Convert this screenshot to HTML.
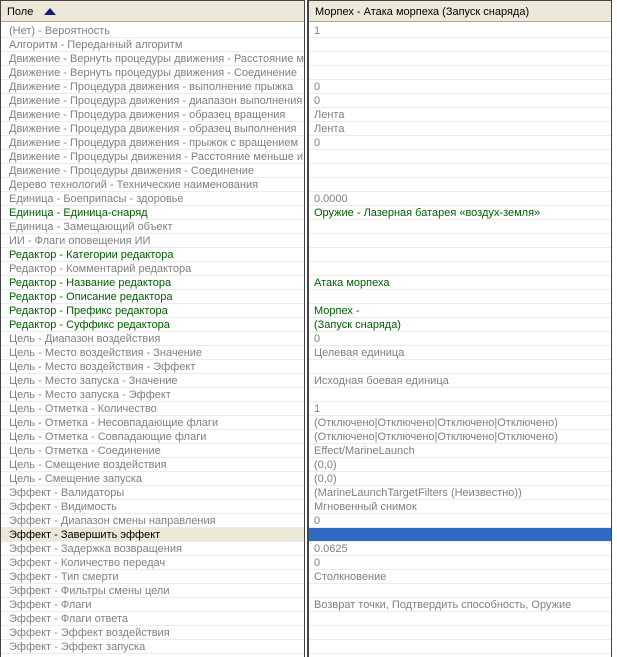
<!DOCTYPE html>
<html><head><meta charset="utf-8"><style>
body{margin:0;width:617px;height:657px;overflow:hidden;background:#fff;font-family:"Liberation Sans","DejaVu Sans",sans-serif;font-size:11px;color:#808080;position:relative}
.pane{position:absolute;top:0;height:657px;overflow:hidden;background:#fff}
#l{left:0;width:304px;border-left:1px solid #444}
#r{left:308px;width:303px;border-left:1px solid #444}
.sep{position:absolute;left:304px;top:0;width:4px;height:657px;background:#fff;border-left:1px solid #444;border-right:1px solid #444;box-sizing:border-box}
.hd{height:22px;background:#ece9d8;border-bottom:1px solid #aca899;border-top:1px solid #444;box-sizing:border-box;color:#000;line-height:22px;padding-left:6px;white-space:nowrap;position:relative}
.hd:after{content:"";position:absolute;right:0;top:2px;bottom:2px;border-right:1px solid #aca899}
.row{height:14px;line-height:15px;border-bottom:1px solid #ececec;box-sizing:border-box;padding-left:8px;white-space:nowrap;overflow:hidden}
#r .row{padding-left:5px}
.g{color:#006000}
.sl{background:#ece9d8;color:#000}
.sb{background:#316ac5}
.rb{position:absolute;left:611px;top:0;width:6px;height:657px;background:#fff;border-left:1px solid #444}
</style></head><body>
<div id="l" class="pane">
<div class="hd">Поле <span style="display:inline-block;width:0;height:0;border-left:6px solid transparent;border-right:6px solid transparent;border-bottom:7px solid #1c1c78;margin-left:8px;vertical-align:0px"></span></div>
<div style="height:2px"></div>
<div class="row">(Нет) - Вероятность</div>
<div class="row">Алгоритм - Переданный алгоритм</div>
<div class="row">Движение - Вернуть процедуры движения - Расстояние м</div>
<div class="row">Движение - Вернуть процедуры движения - Соединение</div>
<div class="row">Движение - Процедура движения - выполнение прыжка</div>
<div class="row">Движение - Процедура движения - диапазон выполнения</div>
<div class="row">Движение - Процедура движения - образец вращения</div>
<div class="row">Движение - Процедура движения - образец выполнения</div>
<div class="row">Движение - Процедура движения - прыжок с вращением</div>
<div class="row">Движение - Процедуры движения - Расстояние меньше и</div>
<div class="row">Движение - Процедуры движения - Соединение</div>
<div class="row">Дерево технологий - Технические наименования</div>
<div class="row">Единица - Боеприпасы - здоровье</div>
<div class="row g">Единица - Единица-снаряд</div>
<div class="row">Единица - Замещающий объект</div>
<div class="row">ИИ - Флаги оповещения ИИ</div>
<div class="row g">Редактор - Категории редактора</div>
<div class="row">Редактор - Комментарий редактора</div>
<div class="row g">Редактор - Название редактора</div>
<div class="row g">Редактор - Описание редактора</div>
<div class="row g">Редактор - Префикс редактора</div>
<div class="row g">Редактор - Суффикс редактора</div>
<div class="row">Цель - Диапазон воздействия</div>
<div class="row">Цель - Место воздействия - Значение</div>
<div class="row">Цель - Место воздействия - Эффект</div>
<div class="row">Цель - Место запуска - Значение</div>
<div class="row">Цель - Место запуска - Эффект</div>
<div class="row">Цель - Отметка - Количество</div>
<div class="row">Цель - Отметка - Несовпадающие флаги</div>
<div class="row">Цель - Отметка - Совпадающие флаги</div>
<div class="row">Цель - Отметка - Соединение</div>
<div class="row">Цель - Смещение воздействия</div>
<div class="row">Цель - Смещение запуска</div>
<div class="row">Эффект - Валидаторы</div>
<div class="row">Эффект - Видимость</div>
<div class="row">Эффект - Диапазон смены направления</div>
<div class="row sl">Эффект - Завершить эффект</div>
<div class="row">Эффект - Задержка возвращения</div>
<div class="row">Эффект - Количество передач</div>
<div class="row">Эффект - Тип смерти</div>
<div class="row">Эффект - Фильтры смены цели</div>
<div class="row">Эффект - Флаги</div>
<div class="row">Эффект - Флаги ответа</div>
<div class="row">Эффект - Эффект воздействия</div>
<div class="row">Эффект - Эффект запуска</div>
</div>
<div class="sep"></div>
<div id="r" class="pane">
<div class="hd">Морпех - Атака морпеха (Запуск снаряда)</div>
<div style="height:2px"></div>
<div class="row">1</div>
<div class="row"></div>
<div class="row"></div>
<div class="row"></div>
<div class="row">0</div>
<div class="row">0</div>
<div class="row">Лента</div>
<div class="row">Лента</div>
<div class="row">0</div>
<div class="row"></div>
<div class="row"></div>
<div class="row"></div>
<div class="row">0.0000</div>
<div class="row g">Оружие - Лазерная батарея «воздух-земля»</div>
<div class="row"></div>
<div class="row"></div>
<div class="row"></div>
<div class="row"></div>
<div class="row g">Атака морпеха</div>
<div class="row"></div>
<div class="row g">Морпех -</div>
<div class="row g">(Запуск снаряда)</div>
<div class="row">0</div>
<div class="row">Целевая единица</div>
<div class="row"></div>
<div class="row">Исходная боевая единица</div>
<div class="row"></div>
<div class="row">1</div>
<div class="row">(Отключено|Отключено|Отключено|Отключено)</div>
<div class="row">(Отключено|Отключено|Отключено|Отключено)</div>
<div class="row">Effect/MarineLaunch</div>
<div class="row">(0,0)</div>
<div class="row">(0,0)</div>
<div class="row">(MarineLaunchTargetFilters (Неизвестно))</div>
<div class="row">Мгновенный снимок</div>
<div class="row">0</div>
<div class="row sb"></div>
<div class="row">0.0625</div>
<div class="row">0</div>
<div class="row">Столкновение</div>
<div class="row"></div>
<div class="row">Возврат точки, Подтвердить способность, Оружие</div>
<div class="row"></div>
<div class="row"></div>
<div class="row"></div>
</div>
<div class="rb"></div>
</body></html>
